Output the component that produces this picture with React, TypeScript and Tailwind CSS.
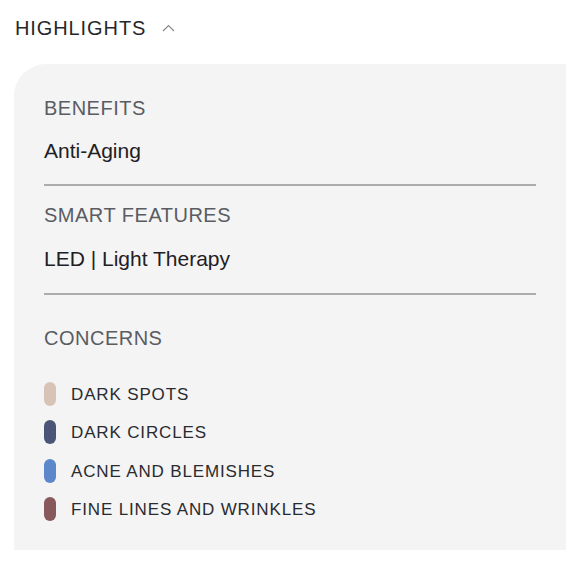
const concerns = [
  { label: 'DARK SPOTS', color: 'bg-[#d8c4b7]' },
  { label: 'DARK CIRCLES', color: 'bg-[#4b5577]' },
  { label: 'ACNE AND BLEMISHES', color: 'bg-[#5c88cb]' },
  { label: 'FINE LINES AND WRINKLES', color: 'bg-[#87595a]' },
];

function ChevronUp() {
  return (
    <svg className="w-[13px] h-[8px] text-[#8a8a8e]" viewBox="0 0 13 8" fill="none">
      <polyline points="1,7 6.5,1.5 12,7" stroke="currentColor" strokeWidth="1.2" />
    </svg>
  );
}

export default function App() {
  return (
    <div
      className="w-[580px] h-[580px] bg-white overflow-hidden"
      style={{ fontFamily: '"Liberation Sans", Arial, sans-serif' }}
    >
      {/* header */}
      <div className="flex items-center pl-[15px] pt-[16px]">
        <h2 className="text-[20px] leading-[24px] tracking-[0.9px] text-[#26272b]">HIGHLIGHTS</h2>
        <div className="ml-[16px] mt-[-1px]">
          <ChevronUp />
        </div>
      </div>

      {/* panel */}
      <div className="ml-[14px] mt-[24px] w-[552px] h-[486px] bg-[#f4f4f4] rounded-tl-[32px] pl-[30px] pr-[30px] pt-[32px]">
        <div className="text-[20px] leading-[24px] tracking-[0.5px] text-[#5a5c62]">BENEFITS</div>
        <div className="mt-[19px] text-[21px] leading-[24px] text-[#1f2024]">Anti-Aging</div>
        <div className="mt-[21px] h-[2px] bg-[#acacac]" />

        <div className="mt-[17px] text-[20px] leading-[24px] tracking-[0.5px] text-[#5a5c62]">SMART FEATURES</div>
        <div className="mt-[20px] text-[21px] leading-[24px] text-[#1f2024]">LED | Light Therapy</div>
        <div className="mt-[22px] h-[2px] bg-[#acacac]" />

        <div className="mt-[31px] text-[20px] leading-[24px] tracking-[0.5px] text-[#5a5c62]">CONCERNS</div>
        <div className="mt-[32px] flex flex-col gap-[14.33px]">
          {concerns.map((c) => (
            <div key={c.label} className="flex items-center h-6">
              <span className={`w-3 h-6 rounded-full ${c.color}`} />
              <span className="ml-[15px] mt-[2px] text-[17px] leading-[24px] tracking-[0.05em] text-[#2a2b30]">
                {c.label}
              </span>
            </div>
          ))}
        </div>
      </div>
    </div>
  );
}
